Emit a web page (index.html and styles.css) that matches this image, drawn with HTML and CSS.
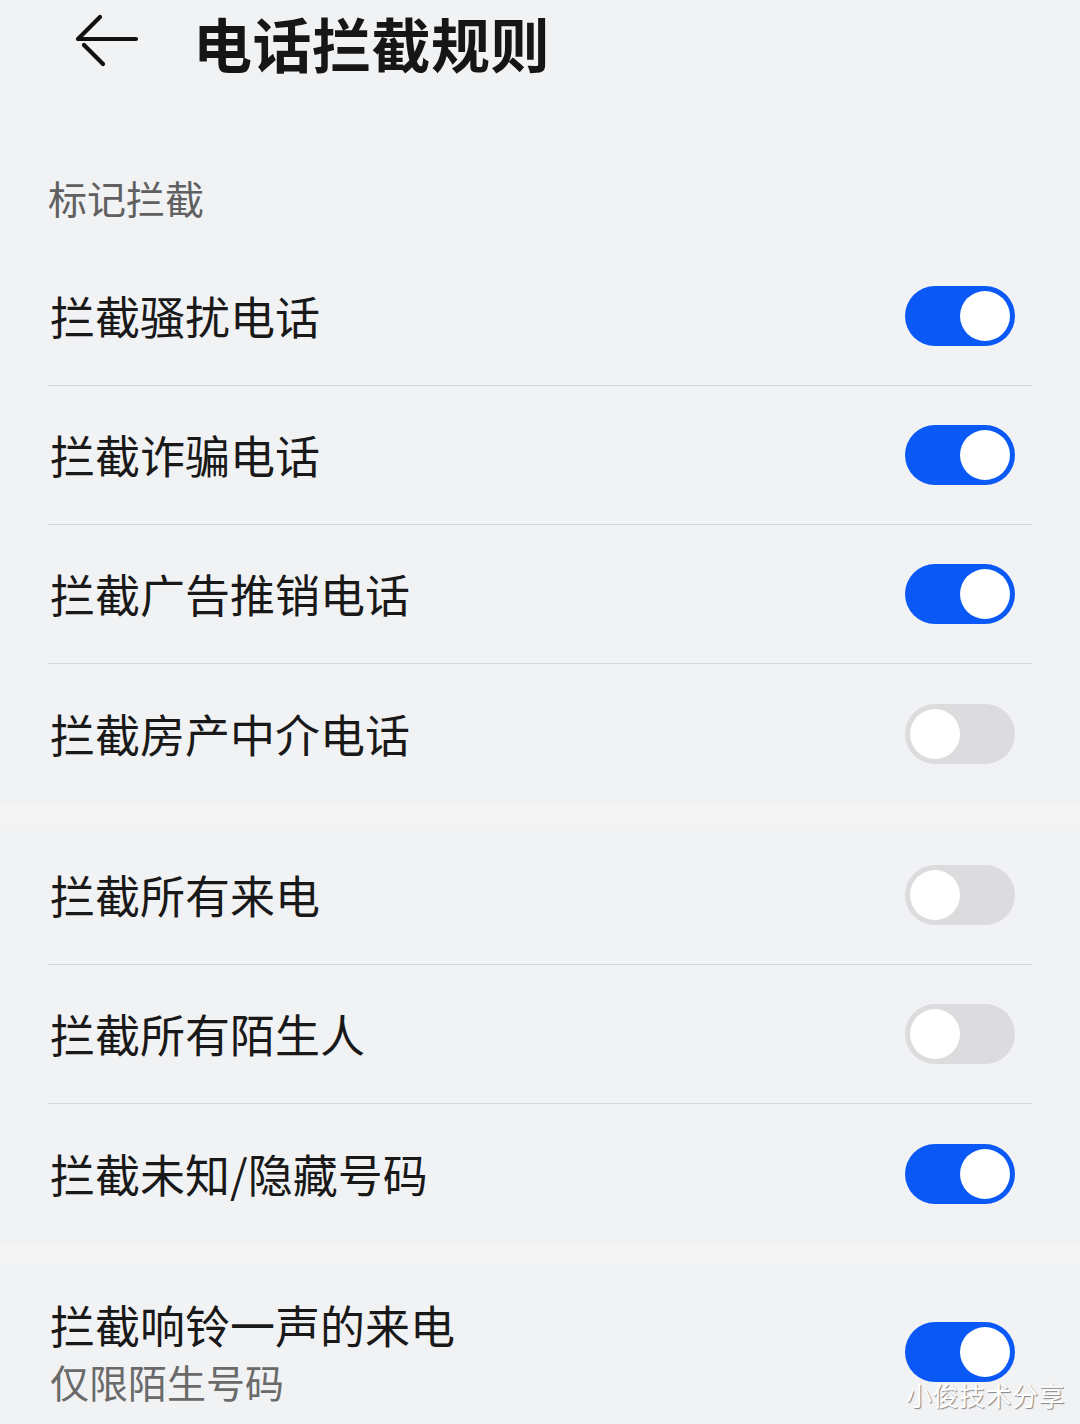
FILE: index.html
```html
<!DOCTYPE html>
<html lang="zh-CN">
<head>
    <meta charset="UTF-8">
    <meta name="viewport" content="width=device-width, initial-scale=1.0">
    <title>电话拦截规则</title>
    <link rel="stylesheet" href="styles.css">
</head>
<body>
    <header class="topbar">
        <svg class="back" width="72" height="64" viewBox="0 0 72 64">
            <path d="M38 8 L16 30 L74 30" fill="none" stroke="#111" stroke-width="4.2" stroke-linecap="round" stroke-linejoin="round"/>
            <path d="M22 36 L41 55" fill="none" stroke="#111" stroke-width="4.2" stroke-linecap="round"/>
        </svg>
        <h1 class="title">电话拦截规则</h1>
    </header>

    <div class="subhead">标记拦截</div>

    <section class="group">
        <div class="row"><span class="label">拦截骚扰电话</span><span class="switch on"></span></div>
        <div class="row"><span class="label">拦截诈骗电话</span><span class="switch on"></span></div>
        <div class="row"><span class="label">拦截广告推销电话</span><span class="switch on"></span></div>
        <div class="row"><span class="label">拦截房产中介电话</span><span class="switch"></span></div>
    </section>

    <div class="band first"></div>

    <section class="group">
        <div class="row"><span class="label">拦截所有来电</span><span class="switch"></span></div>
        <div class="row"><span class="label">拦截所有陌生人</span><span class="switch"></span></div>
        <div class="row"><span class="label">拦截未知/隐藏号码</span><span class="switch on"></span></div>
    </section>

    <div class="band"></div>

    <section class="group">
        <div class="row tall">
            <div class="texts">
                <span class="label">拦截响铃一声的来电</span>
                <span class="sub">仅限陌生号码</span>
            </div>
            <span class="switch on"></span>
        </div>
    </section>

    <div class="watermark">小俊技术分享</div>
</body>
</html>
```

FILE: styles.css
```css
* { box-sizing: border-box; }
body { margin: 0; height: 1424px; overflow: hidden; background: #f1f2f4; font-family: "Noto Sans CJK SC", "Noto Sans", sans-serif; color: #191919; position: relative; }

.topbar { height: 90px; display: flex; align-items: center; padding-left: 62px; }
.back { display: block; margin-top: -8px; overflow: visible; }
.title { margin: -6px 0 0 59px; font-size: 59px; font-weight: 700; line-height: 1; color: #161616; letter-spacing: 0.5px; }

.subhead { padding: 79px 48px 22px; font-size: 39px; line-height: 56px; color: #606060; }

.group { padding: 0 48px; }
.row { height: 139px; display: flex; align-items: center; justify-content: space-between; border-bottom: 1px solid #d6d7da; padding-right: 17px; }
.row:last-child { border-bottom: none; }
.label { font-size: 45px; line-height: 56px; padding-left: 2px; }
.row.tall { height: 176px; align-items: flex-start; padding-top: 34px; }
.row.tall .switch { margin-top: 25px; }
.texts { display: flex; flex-direction: column; }
.sub { font-size: 39px; line-height: 56px; color: #6a6a6a; padding-left: 2px; }

.band { height: 20px; background: #f4f4f4; }
.band.first { height: 23px; }

.switch { width: 110px; height: 60px; border-radius: 30px; background: #dcdcdf; position: relative; flex-shrink: 0; }
.switch::after { content: ""; position: absolute; top: 5px; left: 5px; width: 50px; height: 50px; border-radius: 50%; background: #fff; }
.switch.on { background: #0a59f7; }
.switch.on::after { left: 55px; }

.watermark { position: absolute; right: 15px; bottom: 14px; font-size: 26px; line-height: 30px; color: #fff; text-shadow: 1px 1px 1px rgba(0,0,0,0.45); letter-spacing: 0.5px; }
```
